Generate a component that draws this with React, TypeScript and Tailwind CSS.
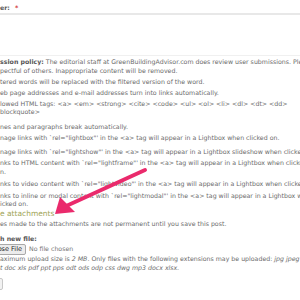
export default function App() {
  const items: { text: React.ReactNode; cont?: string; mt: string }[] = [
    { text: "tered words will be replaced with the filtered version of the word.", mt: "mt-[2.5px]" },
    { text: "eb page addresses and e-mail addresses turn into links automatically.", mt: "mt-[2.5px]" },
    {
      text: "lowed HTML tags: <a> <em> <strong> <cite> <code> <ul> <ol> <li> <dl> <dt> <dd>",
      cont: "blockquote>",
      mt: "mt-[2.5px]",
    },
    { text: "nes and paragraphs break automatically.", mt: "mt-[6px]" },
    { text: "nage links with `rel=\"lightbox\"' in the <a> tag will appear in a Lightbox when clicked on.", mt: "mt-[3px]" },
    { text: "nage links with `rel=\"lightshow\"' in the <a> tag will appear in a Lightbox slideshow when clicked on.", mt: "mt-[5px]" },
    {
      text: "nks to HTML content with `rel=\"lightframe\"' in the <a> tag will appear in a Lightbox when clicked on.",
      cont: "n.",
      mt: "mt-[3px]",
    },
    { text: "nks to video content with `rel=\"lightvideo\"' in the <a> tag will appear in a Lightbox when clicked on.", mt: "mt-[3.5px]" },
    {
      text: "nks to inline or modal content with `rel=\"lightmodal\"' in the <a> tag will appear in a Lightbox when",
      cont: "icked on.",
      mt: "mt-[3.5px]",
    },
  ];

  return (
    <div className="relative w-[300px] h-[300px] overflow-hidden bg-white text-[6.25px] leading-[8.5px] text-[#6b6b6b] font-['DejaVu_Sans',sans-serif] whitespace-nowrap">
      {/* field label + textarea */}
      <div className="pt-[4px] font-bold text-[#5a5a5a]">
        er: <span className="ml-[3px] text-[#d23a3a]">*</span>
      </div>
      <div className="mt-[0.5px] h-[2px] bg-[#e8e8e8]" />
      <div className="h-[40px]" />

      {/* submission policy */}
      <div className="border-t border-[#f0f0f0] pt-[2px]">
        <div>
          <span className="font-bold text-[#555]">ssion policy:</span> The editorial staff at GreenBuildingAdvisor.com does review user submissions. Please be re
        </div>
        <div>pectful of others. Inappropriate content will be removed.</div>
      </div>

      {/* filter tips */}
      <div className="flex flex-col">
        {items.map((it, i) => (
          <div key={i} className={it.mt}>
            <div>{it.text}</div>
            {it.cont && <div>{it.cont}</div>}
          </div>
        ))}
      </div>

      {/* attachments */}
      <div className="text-[7.5px] leading-[10px] text-[#a0a456]">e attachments</div>
      <div className="mt-[1px]">es made to the attachments are not permanent until you save this post.</div>

      <div className="mt-[7px] font-bold text-[#555]">h new file:</div>
      <div className="flex items-center gap-[3px]">
        <div className="-ml-[19px] px-[3px] h-[11px] leading-[9px] text-[6.5px] text-[#222] bg-[#ececec] border border-[#a9a9a9] rounded-[2px]">
          Choose File
        </div>
        <span className="text-[#777]">No file chosen</span>
      </div>
      <div className="mt-[0.5px]">
        aximum upload size is <em>2 MB</em>. Only files with the following extensions may be uploaded: <em>jpg jpeg</em>
      </div>
      <div className="italic">t doc xls pdf ppt pps odt ods odp css dwg mp3 docx xlsx.</div>

      <div className="mt-[6px] -ml-[20px] w-[23px] h-[12px] border border-[#c8c8c8] rounded-[2px] bg-[#f2f2f2]" />

      {/* annotation arrow */}
      <svg className="absolute left-0 top-0" width="300" height="300" viewBox="0 0 300 300">
        <line x1="145" y1="170" x2="64" y2="207" stroke="#ea2a6c" strokeWidth="4" strokeLinecap="round" />
        <polygon points="55,214 60,197 75,212" fill="#ea2a6c" />
      </svg>
    </div>
  );
}
